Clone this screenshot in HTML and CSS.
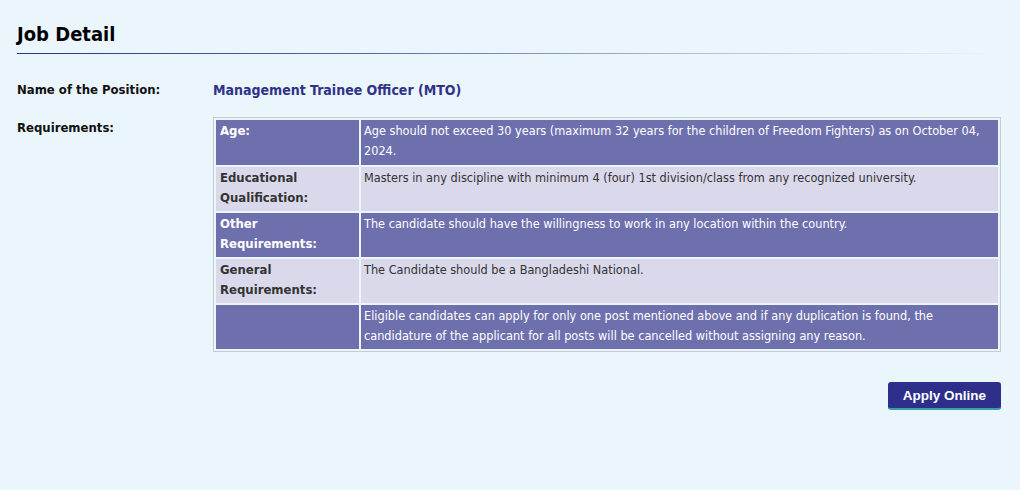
FILE: index.html
```html
<!DOCTYPE html>
<html>
<head>
<meta charset="utf-8">
<link rel="stylesheet" href="styles.css">
</head>
<body>
<div class="page">
  <h2 class="title">Job Detail</h2>
  <div class="rule"></div>
  <div class="field name-row">
    <div class="label">Name of the Position:</div>
    <div class="position">Management Trainee Officer (MTO)</div>
  </div>
  <div class="field req">
    <div class="label">Requirements:</div>
    <table class="reqs">
      <tr class="dark first">
        <th>Age:</th>
        <td>Age should not exceed 30 years (maximum 32 years for the children of Freedom Fighters) as on October 04, 2024.</td>
      </tr>
      <tr class="light">
        <th>Educational Qualification:</th>
        <td>Masters in any discipline with minimum 4 (four) 1st division/class from any recognized university.</td>
      </tr>
      <tr class="dark">
        <th>Other Requirements:</th>
        <td>The candidate should have the willingness to work in any location within the country.</td>
      </tr>
      <tr class="light">
        <th>General Requirements:</th>
        <td>The Candidate should be a Bangladeshi National.</td>
      </tr>
      <tr class="dark">
        <th></th>
        <td>Eligible candidates can apply for only one post mentioned above and if any duplication is found, the candidature of the applicant for all posts will be cancelled without assigning any reason.</td>
      </tr>
    </table>
  </div>
  <div class="actions">
    <button class="apply">Apply Online</button>
  </div>
</div>
</body>
</html>
```
FILE: styles.css
```css
html, body {
  margin: 0;
  padding: 0;
  background: #ebf5fc;
}
body {
  font-family: "DejaVu Sans Condensed", "DejaVu Sans", sans-serif;
  color: #111;
}
.page {
  padding: 22px 19px 0 17px;
}
.title {
  margin: 0;
  font-size: 20px;
  font-weight: bold;
  line-height: 24px;
  color: #000;
}
.rule {
  height: 1px;
  margin-top: 7px;
  margin-right: 3px;
  background: linear-gradient(to right, #2b3486 0%, #5c66a0 35%, #b4bfd6 70%, rgba(235,245,252,0) 100%);
}
.field {
  display: flex;
  align-items: flex-start;
}
.name-row {
  margin-top: 26px;
}
.field .label {
  width: 196px;
  font-size: 13px;
  font-weight: bold;
  line-height: 20px;
  color: #111;
  flex: none;
}
.position {
  font-size: 14px;
  font-weight: bold;
  color: #2f3388;
  line-height: 20px;
}
.req {
  margin-top: 17px;
}
.req .label {
  margin-top: 1px;
}
.reqs {
  flex: 1;
  border: 1px solid #c6cbd2;
  border-spacing: 2px;
  font-size: 12.6px;
  line-height: 20px;
}
.reqs th, .reqs td {
  text-align: left;
  vertical-align: top;
  padding: 1px 4px 3px 4px;
}
.reqs .first th, .reqs .first td {
  padding-bottom: 4px;
}
.reqs td {
  padding-left: 3px;
  font-weight: normal;
}
.reqs th {
  width: 135px;
  font-weight: bold;
  font-size: 13px;
}
.dark th, .dark td {
  background: #6e70ae;
  color: #fff;
}
.light th, .light td {
  background: #d9d9eb;
  color: #333;
}
.actions {
  display: flex;
  justify-content: flex-end;
  margin-top: 30px;
}
.apply {
  font-family: "Liberation Sans", Arial, sans-serif;
  font-size: 13.5px;
  font-weight: bold;
  color: #fff;
  background: #2e2f8a;
  border: 0;
  border-bottom: 2px solid #3a9fa6;
  border-radius: 3px;
  width: 113px;
  height: 28px;
  padding: 0;
}
```
